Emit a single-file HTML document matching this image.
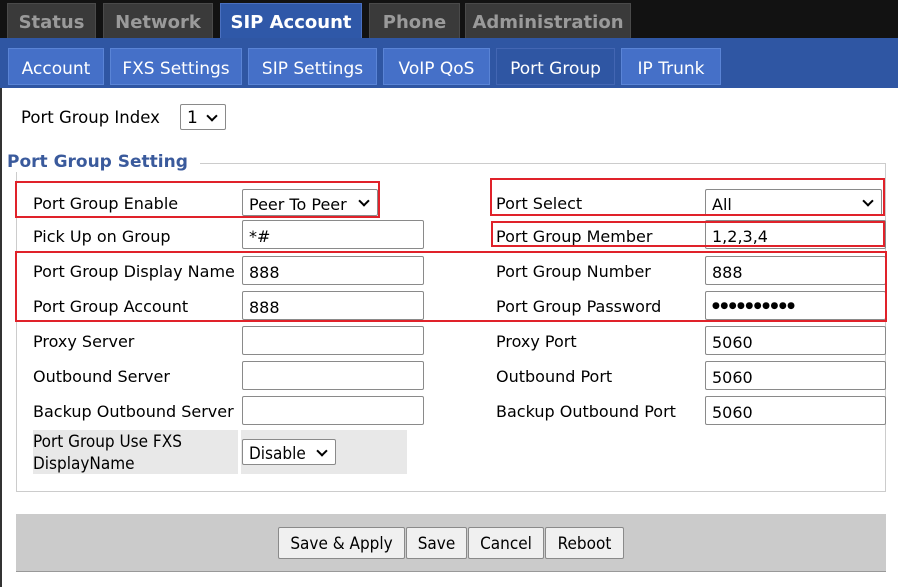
<!DOCTYPE html>
<html><head><meta charset="utf-8"><style>
*{box-sizing:border-box;margin:0;padding:0}
body{width:898px;height:587px;position:relative;background:#fff;font-family:"DejaVu Sans","Liberation Sans",sans-serif;overflow:hidden;color:#000}
.a{position:absolute}
.top{left:0;top:0;width:898px;height:38px;background:#121212}
.tt{position:absolute;top:3px;height:35px;background:#3a3a3a;color:#9a9a9a;font-weight:bold;font-size:18px;text-align:center;line-height:38px;border:1px solid #4a4a4a;border-bottom:none}
.tt.on{background:#2f58a8;color:#fff;border-color:#4a70c0}
.sub{left:0;top:38px;width:898px;height:50px;background:#2f56a3}
.st{position:absolute;top:48px;height:37px;background:#4570c8;color:#fff;font-size:17px;text-align:center;line-height:40px;border:1px solid #5a84d6}
.st.on{background:#2f56a3;border-color:#4366b3}
.lb{position:absolute;font-size:16px;line-height:20px}
.in{position:absolute;height:29px;border:1px solid #8a8a8a;border-radius:2px;background:#fff;font-size:16px;line-height:31px;padding-left:6px}
.sel:after{content:"";position:absolute;right:9px;top:7px;width:6px;height:6px;border-right:2px solid #000;border-bottom:2px solid #000;transform:rotate(45deg)}
.red{position:absolute;border:2px solid #e0222a}
.btn{position:absolute;top:527px;height:32px;background:#f0f0f0;border:1px solid #8a8a8a;border-radius:2px;font-size:17px;text-align:center;line-height:32px;font-family:"DejaVu Sans Condensed","DejaVu Sans",sans-serif}
</style></head><body>
<div class="a top"></div>
<div class="tt" style="left:7px;width:89px">Status</div>
<div class="tt" style="left:103px;width:110px">Network</div>
<div class="tt on" style="left:220px;width:142px">SIP Account</div>
<div class="tt" style="left:369px;width:91px">Phone</div>
<div class="tt" style="left:465px;width:166px">Administration</div>
<div class="a sub"></div>
<div class="st" style="left:8px;width:96px">Account</div>
<div class="st" style="left:110px;width:132px">FXS Settings</div>
<div class="st" style="left:248px;width:129px">SIP Settings</div>
<div class="st" style="left:383px;width:107px">VoIP QoS</div>
<div class="st on" style="left:496px;width:119px">Port Group</div>
<div class="st" style="left:621px;width:100px">IP Trunk</div>
<div class="a" style="left:0;top:88px;width:2px;height:499px;background:#333"></div>

<div class="lb" style="left:21px;top:108px;font-size:16.5px">Port Group Index</div>
<div class="in sel" style="left:180px;top:104px;width:46px;height:26px;line-height:26px;font-size:17px">1</div>

<div class="a" style="left:16px;top:163px;width:870px;height:329px;border:1px solid #ccc"></div>
<div class="a" style="left:3px;top:152px;background:#fff;padding:0 4px;font-weight:bold;color:#3a5a9c;font-size:17px;width:197px">Port Group Setting</div>

<div class="lb" style="left:33px;top:194px">Port Group Enable</div>
<div class="in sel" style="left:242px;top:189px;width:136px;height:27px;line-height:29px">Peer To Peer</div>
<div class="lb" style="left:33px;top:227px">Pick Up on Group</div>
<div class="in" style="left:242px;top:220px;width:182px">*#</div>
<div class="lb" style="left:33px;top:262px">Port Group Display Name</div>
<div class="in" style="left:242px;top:256px;width:182px">888</div>
<div class="lb" style="left:33px;top:297px">Port Group Account</div>
<div class="in" style="left:242px;top:291px;width:182px">888</div>
<div class="lb" style="left:33px;top:332px">Proxy Server</div>
<div class="in" style="left:242px;top:326px;width:182px"></div>
<div class="lb" style="left:33px;top:367px">Outbound Server</div>
<div class="in" style="left:242px;top:361px;width:182px"></div>
<div class="lb" style="left:33px;top:402px">Backup Outbound Server</div>
<div class="in" style="left:242px;top:396px;width:182px"></div>
<div class="a" style="left:33px;top:430px;width:205px;height:44px;background:#e8e8e8"></div>
<div class="a" style="left:241px;top:430px;width:166px;height:44px;background:#e8e8e8"></div>
<div class="lb" style="left:33px;top:431px;font-size:17px;line-height:22px;font-family:'DejaVu Sans Condensed','DejaVu Sans',sans-serif">Port Group Use FXS<br>DisplayName</div>
<div class="in sel" style="left:242px;top:439px;width:94px;height:26px;line-height:28px;font-size:17px;font-family:'DejaVu Sans Condensed','DejaVu Sans',sans-serif;padding-right:20px">Disable</div>

<div class="lb" style="left:496px;top:194px">Port Select</div>
<div class="in sel" style="left:705px;top:189px;width:177px;height:27px;line-height:29px">All</div>
<div class="lb" style="left:496px;top:227px">Port Group Member</div>
<div class="in" style="left:705px;top:220px;width:181px">1,2,3,4</div>
<div class="lb" style="left:496px;top:262px">Port Group Number</div>
<div class="in" style="left:705px;top:256px;width:181px">888</div>
<div class="lb" style="left:496px;top:297px">Port Group Password</div>
<div class="in" style="left:705px;top:291px;width:181px;font-size:9px;line-height:28px;letter-spacing:0.5px">●●●●●●●●●●</div>
<div class="lb" style="left:496px;top:332px">Proxy Port</div>
<div class="in" style="left:705px;top:326px;width:181px">5060</div>
<div class="lb" style="left:496px;top:367px">Outbound Port</div>
<div class="in" style="left:705px;top:361px;width:181px">5060</div>
<div class="lb" style="left:496px;top:402px">Backup Outbound Port</div>
<div class="in" style="left:705px;top:396px;width:181px">5060</div>

<div class="red" style="left:15px;top:181px;width:365px;height:37px"></div>
<div class="red" style="left:490px;top:178px;width:395px;height:38px"></div>
<div class="red" style="left:491px;top:221px;width:394px;height:26px"></div>
<div class="red" style="left:15px;top:251px;width:872px;height:71px"></div>

<div class="a" style="left:16px;top:514px;width:870px;height:58px;background:#cbcbcb;border-bottom:1px solid #999"></div>
<div class="btn" style="left:278px;width:127px">Save &amp; Apply</div>
<div class="btn" style="left:406px;width:61px">Save</div>
<div class="btn" style="left:468px;width:76px">Cancel</div>
<div class="btn" style="left:545px;width:79px">Reboot</div>
</body></html>
